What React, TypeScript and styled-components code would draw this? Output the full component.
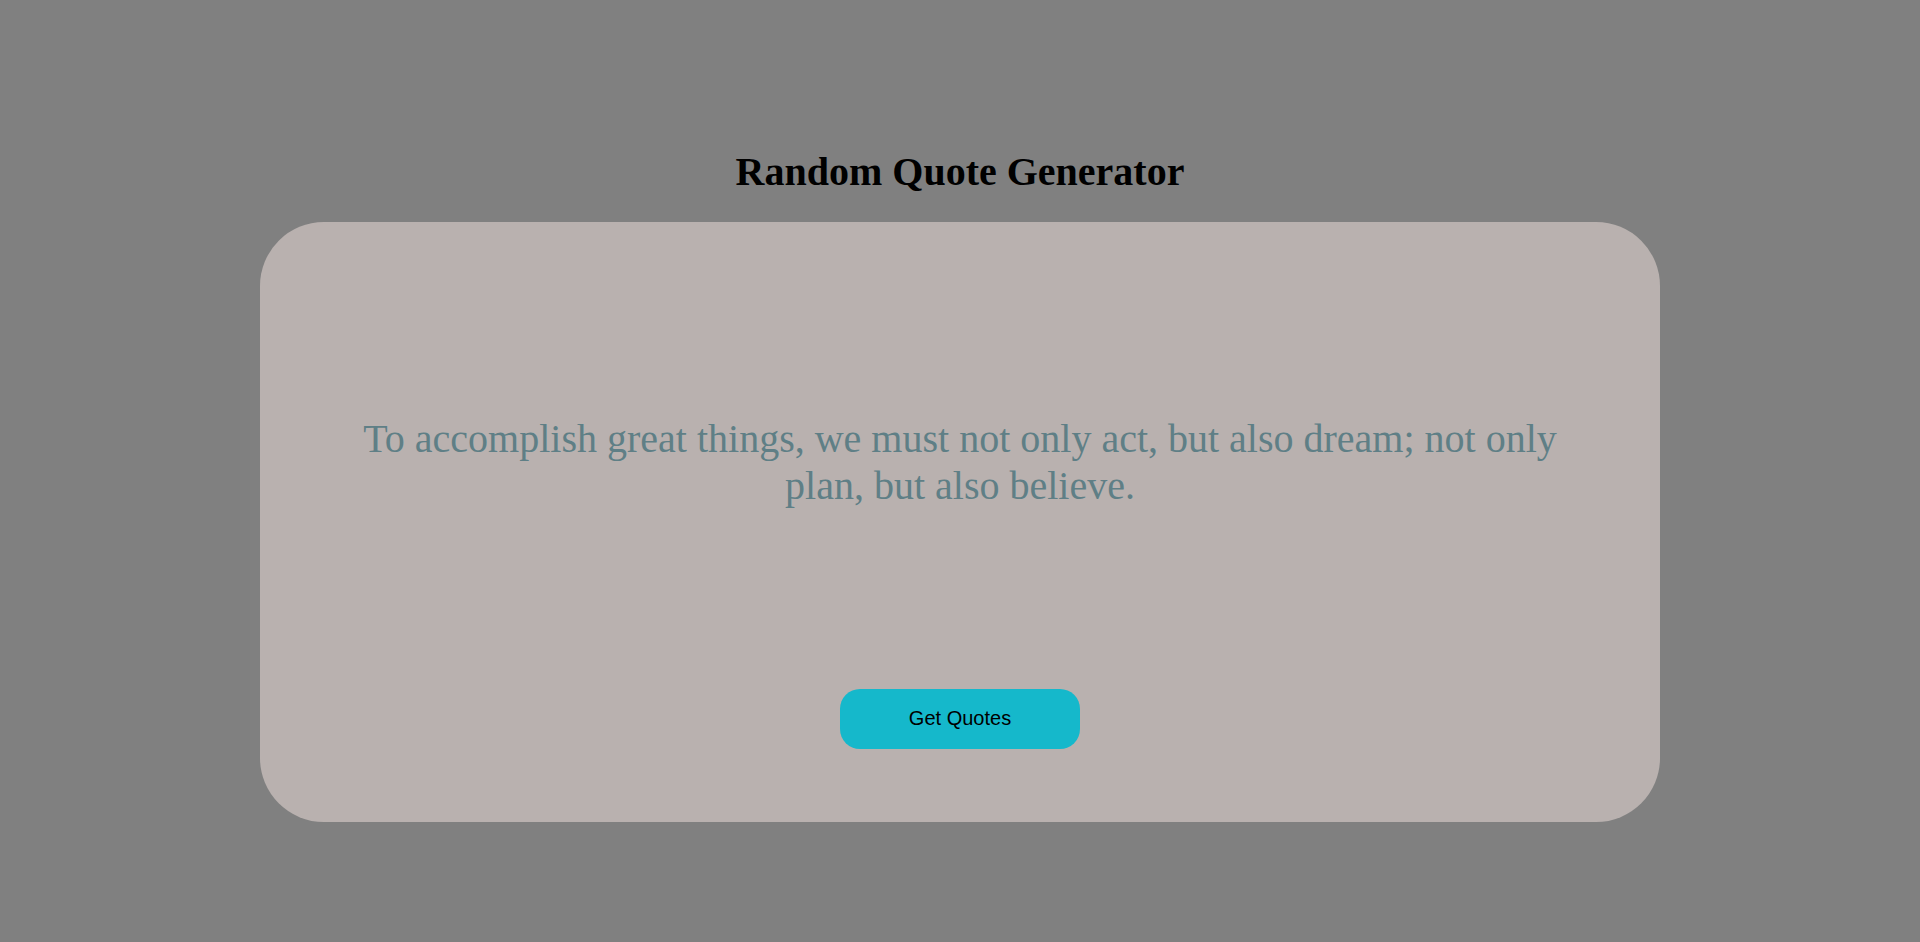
import React, { useState } from "react";
import styled, { createGlobalStyle } from "styled-components";

const GlobalStyle = createGlobalStyle`
  html, body {
    margin: 0;
    padding: 0;
    background: #808080;
  }
  * {
    box-sizing: border-box;
  }
`;

const Page = styled.div`
  min-height: 100vh;
  display: flex;
  flex-direction: column;
  align-items: center;
  justify-content: center;
  font-family: "Liberation Serif", "Times New Roman", serif;
`;

const Title = styled.h1`
  margin: 27px 0;
  font-size: 40px;
  font-weight: bold;
  color: #000;
`;

const Card = styled.div`
  width: 1400px;
  height: 600px;
  padding: 193px 90px 0;
  border-radius: 64px;
  background: #b9b1af;
  display: flex;
  flex-direction: column;
  align-items: center;
`;

const Quote = styled.p`
  margin: 0;
  font-size: 40px;
  color: #5f7f86;
  text-align: center;
`;

const Button = styled.button`
  margin-top: 180px;
  width: 240px;
  height: 60px;
  border: none;
  border-radius: 20px;
  background: #15b8cb;
  color: #000;
  font-family: "Liberation Sans", Arial, sans-serif;
  font-size: 20px;
  cursor: pointer;
`;

const quotes = [
  "To accomplish great things, we must not only act, but also dream; not only plan, but also believe.",
  "The only way to do great work is to love what you do.",
  "Believe you can and you're halfway there.",
];

export default function App() {
  const [index, setIndex] = useState(0);

  return (
    <>
      <GlobalStyle />
      <Page>
        <Title>Random Quote Generator</Title>
        <Card>
          <Quote>{quotes[index]}</Quote>
          <Button onClick={() => setIndex((index + 1) % quotes.length)}>
            Get Quotes
          </Button>
        </Card>
      </Page>
    </>
  );
}
